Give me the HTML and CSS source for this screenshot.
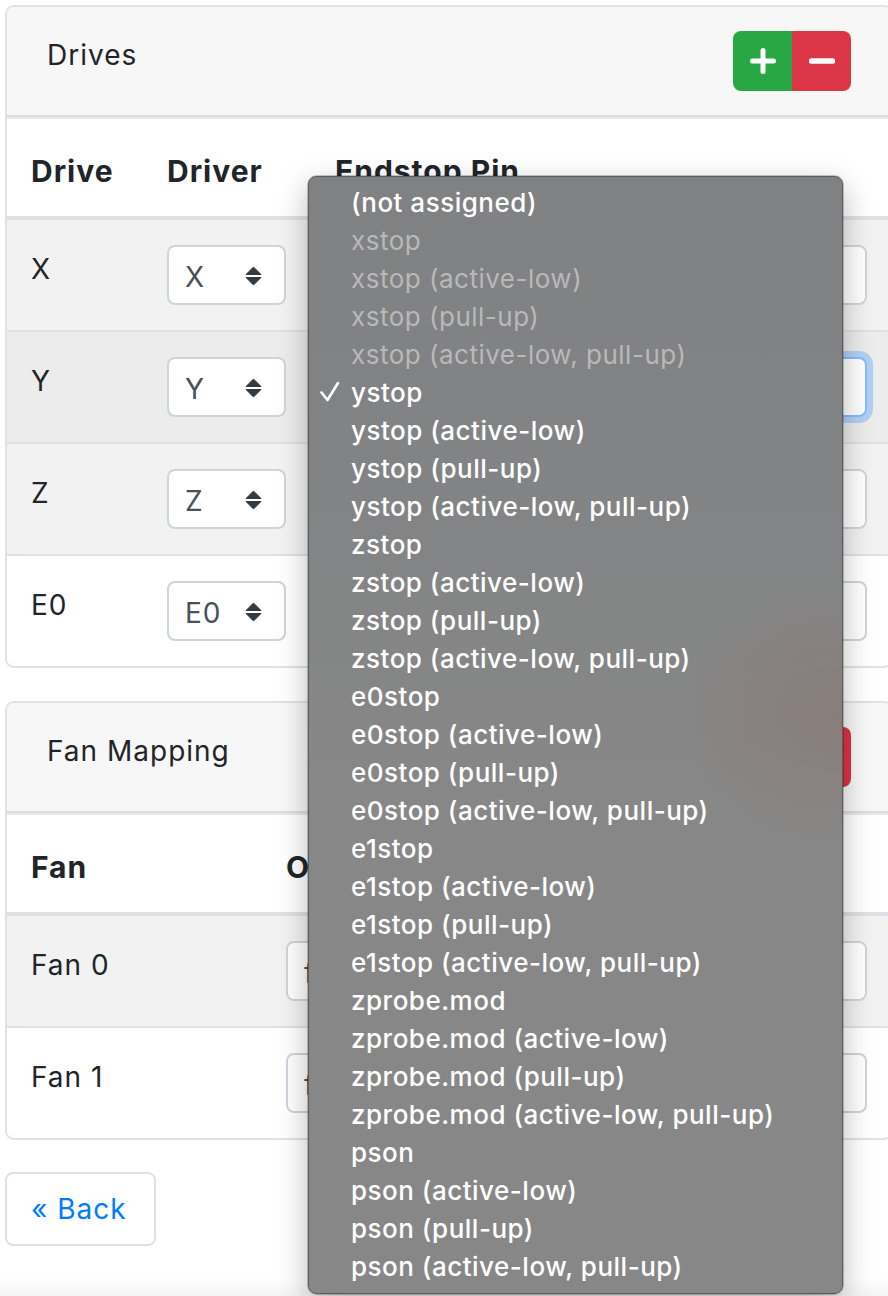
FILE: index.html
```html
<!DOCTYPE html>
<html>
<head>
<meta charset="utf-8">
<link rel="stylesheet" href="styles.css">
</head>
<body>
<div class="page">
  <div class="card">
    <div class="card-header">
      <span class="title">Drives</span>
      <div class="btn-group">
        <button class="btn btn-add"><svg width="26" height="26" viewBox="0 0 26 26"><path d="M13 2.5V23.5M2.5 13H23.5" stroke="#fff" stroke-width="5" stroke-linecap="round"/></svg></button>
        <button class="btn btn-remove"><svg width="26" height="26" viewBox="0 0 26 26"><path d="M2.5 13H23.5" stroke="#fff" stroke-width="5.5" stroke-linecap="round"/></svg></button>
      </div>
    </div>
    <table class="table">
      <colgroup><col class="w-drive"><col class="w-driver"><col></colgroup>
      <thead><tr><th>Drive</th><th>Driver</th><th>Endstop Pin</th></tr></thead>
      <tbody>
        <tr class="striped"><td class="label">X</td><td><div class="select small"><span>X</span><svg class="arr" width="17" height="20" viewBox="0 0 17 20"><path d="M1 8.5L8.5 1L16 8.5Z M1 11.5L16 11.5L8.5 19Z" fill="#343a40" stroke="#343a40" stroke-width="1" stroke-linejoin="round"/></svg></div></td><td><div class="select wide"></div></td></tr>
        <tr class="hover"><td class="label">Y</td><td><div class="select small"><span>Y</span><svg class="arr" width="17" height="20" viewBox="0 0 17 20"><path d="M1 8.5L8.5 1L16 8.5Z M1 11.5L16 11.5L8.5 19Z" fill="#343a40" stroke="#343a40" stroke-width="1" stroke-linejoin="round"/></svg></div></td><td><div class="select wide focus"></div></td></tr>
        <tr class="striped"><td class="label">Z</td><td><div class="select small"><span>Z</span><svg class="arr" width="17" height="20" viewBox="0 0 17 20"><path d="M1 8.5L8.5 1L16 8.5Z M1 11.5L16 11.5L8.5 19Z" fill="#343a40" stroke="#343a40" stroke-width="1" stroke-linejoin="round"/></svg></div></td><td><div class="select wide"></div></td></tr>
        <tr><td class="label">E0</td><td><div class="select small"><span>E0</span><svg class="arr" width="17" height="20" viewBox="0 0 17 20"><path d="M1 8.5L8.5 1L16 8.5Z M1 11.5L16 11.5L8.5 19Z" fill="#343a40" stroke="#343a40" stroke-width="1" stroke-linejoin="round"/></svg></div></td><td><div class="select wide"></div></td></tr>
      </tbody>
    </table>
  </div>

  <div class="card">
    <div class="card-header">
      <span class="title">Fan Mapping</span>
      <div class="btn-group">
        <button class="btn btn-add"><svg width="26" height="26" viewBox="0 0 26 26"><path d="M13 2.5V23.5M2.5 13H23.5" stroke="#fff" stroke-width="5" stroke-linecap="round"/></svg></button>
        <button class="btn btn-remove"><svg width="26" height="26" viewBox="0 0 26 26"><path d="M2.5 13H23.5" stroke="#fff" stroke-width="5.5" stroke-linecap="round"/></svg></button>
      </div>
    </div>
    <table class="table">
      <colgroup><col class="w-fan"><col></colgroup>
      <thead><tr><th>Fan</th><th>Output</th></tr></thead>
      <tbody>
        <tr class="striped"><td class="label">Fan 0</td><td><div class="select wide"><span>fan0</span></div></td></tr>
        <tr><td class="label">Fan 1</td><td><div class="select wide"><span>fan1</span></div></td></tr>
      </tbody>
    </table>
  </div>

  <div class="actions">
    <a class="btn-back">« Back</a>
  </div>

  <div class="menu">
    <ul>
      <li>(not assigned)</li>
      <li class="dis">xstop</li>
      <li class="dis">xstop (active-low)</li>
      <li class="dis">xstop (pull-up)</li>
      <li class="dis">xstop (active-low, pull-up)</li>
      <li class="checked"><svg class="check" width="20" height="22" viewBox="0 0 20 22"><path d="M1.5 11.5L7.5 19L18 2" fill="none" stroke="#fff" stroke-width="2.6" stroke-linecap="round" stroke-linejoin="round"/></svg>ystop</li>
      <li>ystop (active-low)</li>
      <li>ystop (pull-up)</li>
      <li>ystop (active-low, pull-up)</li>
      <li>zstop</li>
      <li>zstop (active-low)</li>
      <li>zstop (pull-up)</li>
      <li>zstop (active-low, pull-up)</li>
      <li>e0stop</li>
      <li>e0stop (active-low)</li>
      <li>e0stop (pull-up)</li>
      <li>e0stop (active-low, pull-up)</li>
      <li>e1stop</li>
      <li>e1stop (active-low)</li>
      <li>e1stop (pull-up)</li>
      <li>e1stop (active-low, pull-up)</li>
      <li>zprobe.mod</li>
      <li>zprobe.mod (active-low)</li>
      <li>zprobe.mod (pull-up)</li>
      <li>zprobe.mod (active-low, pull-up)</li>
      <li>pson</li>
      <li>pson (active-low)</li>
      <li>pson (pull-up)</li>
      <li>pson (active-low, pull-up)</li>
    </ul>
  </div>
</div>
</body>
</html>
```

FILE: styles.css
```css
html, body {
  margin: 0;
  padding: 0;
  overflow: hidden;
}
body {
  width: 888px;
  height: 1296px;
  background: linear-gradient(to bottom, #fff 1278px, #f4f4f4 1296px);
  font-family: Inter, "Liberation Sans", sans-serif;
  font-size: 28px;
  letter-spacing: 1px;
  color: #212529;
}
.page {
  position: relative;
  padding: 5px 0 0 5px;
  height: 1291px;
}
.card {
  width: 884px;
  border: 2px solid #e2e2e2;
  border-radius: 9px;
  background: #fff;
  overflow: hidden;
  margin-bottom: 32px;
}
.card + .card {
  margin-top: 33px;
}
.card-header {
  display: flex;
  justify-content: space-between;
  align-items: flex-start;
  height: 60px;
  padding: 24px 40px 24px 40px;
  background: #f7f7f7;
  border-bottom: 2px solid #dcdcdc;
}
.title {
  line-height: 49px;
}
.btn-group {
  display: flex;
}
.btn {
  width: 59px;
  height: 60px;
  border: 0;
  padding: 0;
  margin: 0;
  display: flex;
  align-items: center;
  justify-content: center;
}
.btn-add {
  background: #28a745;
  border-radius: 8px 0 0 8px;
}
.btn-remove {
  background: #dc3545;
  border-radius: 0 8px 8px 0;
}
.table {
  width: 100%;
  border-collapse: separate;
  border-spacing: 0;
  table-layout: fixed;
}
.w-drive { width: 136px; }
.w-driver { width: 168px; }
.w-fan { width: 255px; }
.table th {
  text-align: left;
  font-weight: 700;
  font-size: 30px;
  line-height: 41px;
  padding: 32px 24px 24px;
  border-top: 2px solid #e6e8ea;
  border-bottom: 4px solid #dee2e6;
  white-space: nowrap;
}
.table td {
  border-top: 2px solid #dee2e6;
  padding: 25px 24px;
  vertical-align: top;
}
.table tbody tr:first-child td {
  border-top: 0;
}
.table td.label {
  padding-top: 29px;
  padding-bottom: 0;
  line-height: 40px;
}
.striped { background: #f2f2f2; }
.hover { background: #ececec; }
.select {
  box-sizing: border-box;
  height: 60px;
  border: 2px solid #ced4da;
  border-radius: 8px;
  background: #fff;
  color: #495057;
  display: flex;
  align-items: center;
  justify-content: space-between;
  padding: 4px 22px 0 16px;
}
.select.small { width: 119px; }
.select.wide { width: 100%; }
.select .arr { margin-top: -3px; }
.select.focus {
  border-color: #80bdff;
  box-shadow: 0 0 0 6px rgba(0, 123, 255, 0.25);
}
.actions {
  display: flex;
}
.btn-back {
  display: block;
  border: 2px solid #dee2e6;
  border-radius: 8px;
  padding: 15px 27px 15px 24px;
  line-height: 40px;
  color: #007bff;
  background: #fff;
}
.menu {
  position: absolute;
  left: 308px;
  top: 176px;
  width: 535px;
  height: 1118px;
  box-sizing: border-box;
  border: 1px solid #5c5c5c;
  border-radius: 8px;
  background:
    radial-gradient(ellipse 150px 130px at 525px 540px, rgba(140, 108, 98, 0.35), rgba(140, 108, 98, 0)),
    linear-gradient(to bottom, #7f8183 0px, #828384 300px, #878787 620px, #878787 100%);
  box-shadow: 0 10px 30px rgba(0, 0, 0, 0.28), 0 0 0 0.5px rgba(0, 0, 0, 0.4);
  overflow: hidden;
  letter-spacing: 0.5px;
}
.menu ul {
  list-style: none;
  margin: 0;
  padding: 7px 0 9px;
}
.menu li {
  position: relative;
  line-height: 38px;
  height: 38px;
  padding-left: 42px;
  color: #fff;
  font-size: 26px;
  font-weight: 500;
  white-space: nowrap;
}
.menu li.dis {
  color: #b9b9b9;
  font-weight: 400;
}
.menu .check {
  position: absolute;
  left: 11px;
  top: 7px;
}
```
